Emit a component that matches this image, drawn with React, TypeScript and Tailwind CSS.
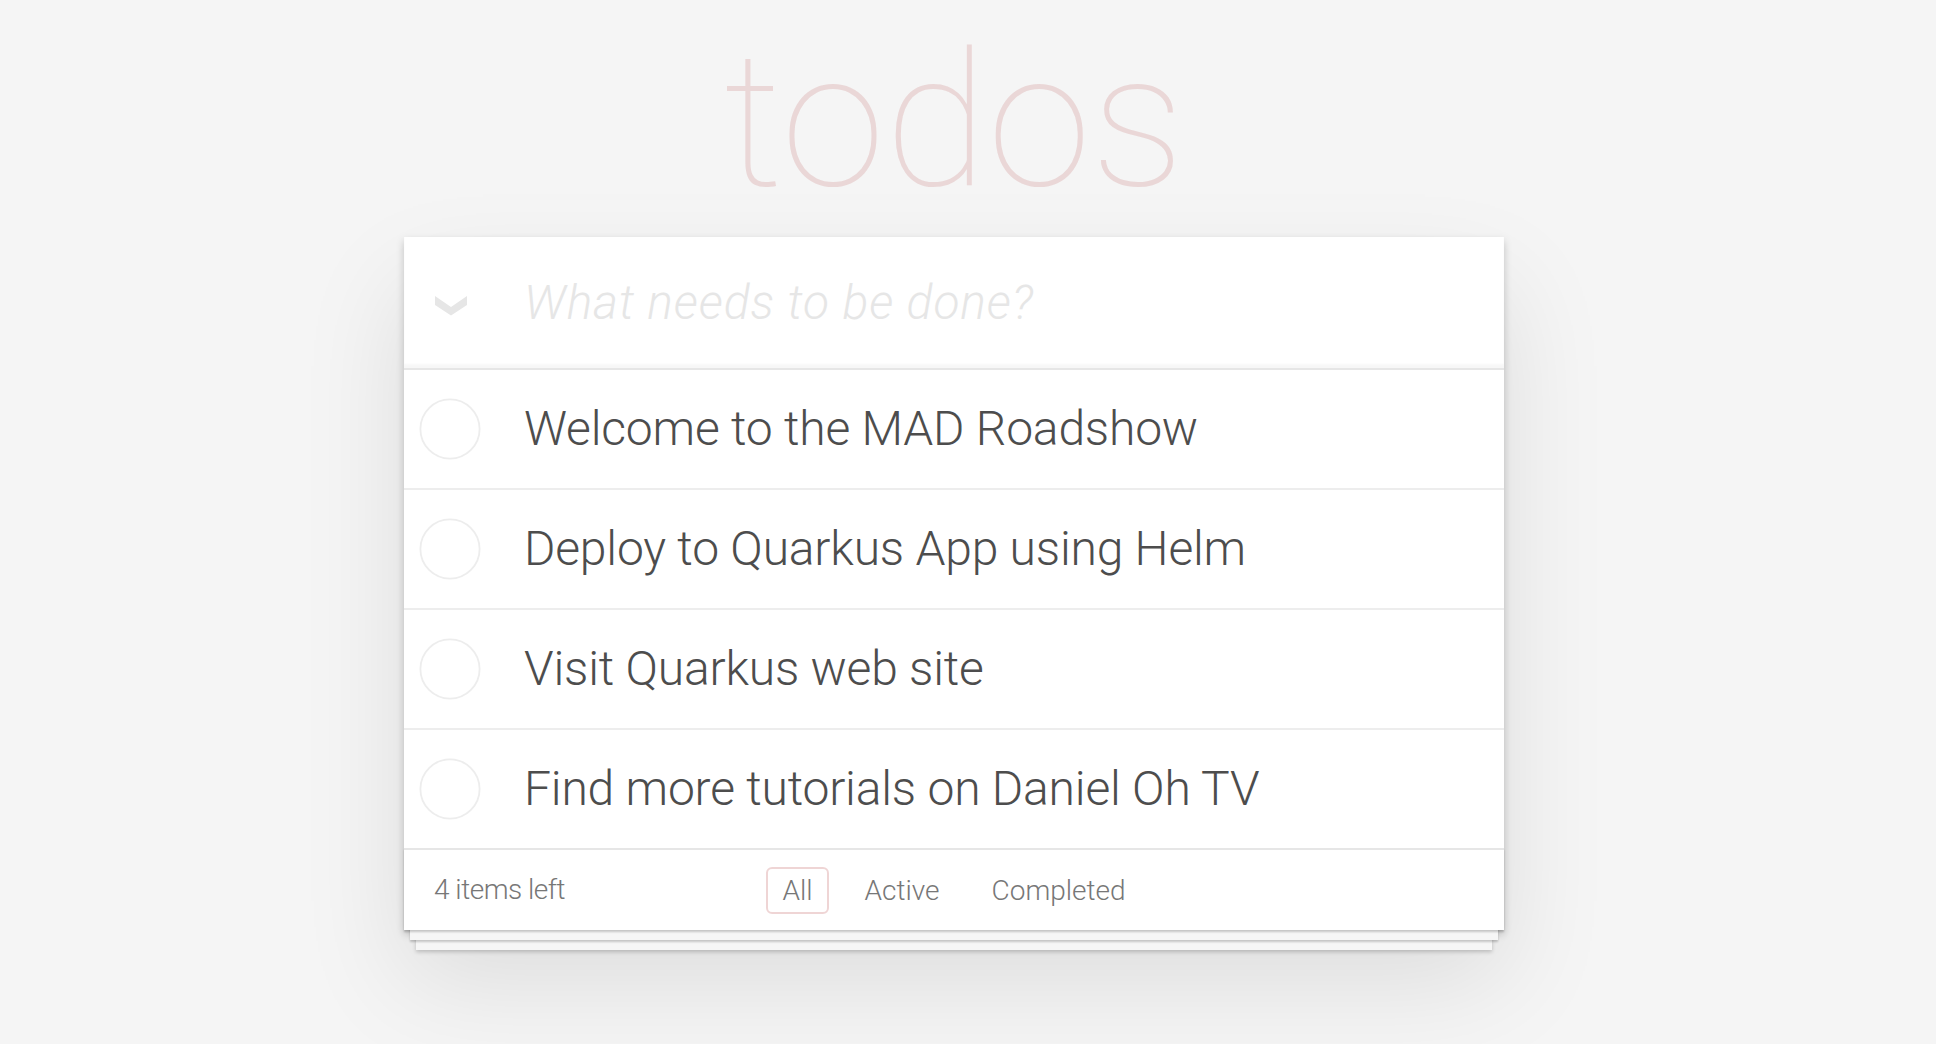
export default function App() {
  const items = [
    "Welcome to the MAD Roadshow",
    "Deploy to Quarkus App using Helm",
    "Visit Quarkus web site",
    "Find more tutorials on Daniel Oh TV",
  ];
  return (
    <div className="min-h-screen bg-[#f5f5f5] font-['Roboto',Arial,sans-serif] font-light text-[#4d4d4d]">
      <div className="ml-[404px] w-[1100px] pt-[27px]">
        <h1 className="mb-[22px] h-[188px] text-center font-['Roboto',sans-serif] text-[188px] font-thin leading-[188px] text-[rgba(175,47,47,0.15)]">
          todos
        </h1>
        <section className="bg-white shadow-[0_4px_8px_0_rgba(0,0,0,0.2),0_50px_100px_0_rgba(0,0,0,0.1)]">
          <header className="flex h-[131px] shadow-[inset_0_-4px_2px_rgba(0,0,0,0.03)]">
            <svg className="ml-[31px] mt-[59px] shrink-0" width="32" height="20" viewBox="0 0 32 20">
              <polygon points="0,0 16,11 32,0 32,9 16,19.5 0,9" fill="#e6e6e6" />
            </svg>
            <input
              className="h-full min-w-0 flex-1 bg-transparent pl-[57px] pr-[32px] text-[48px] font-light text-[#4d4d4d] outline-none placeholder:italic placeholder:tracking-[0.9px] placeholder:text-[#e6e6e6]"
              placeholder="What needs to be done?"
            />
          </header>
          <ul className="border-t-2 border-[#e6e6e6]">
            {items.map((t, i) => (
              <li
                key={t}
                className={
                  i < items.length - 1
                    ? "flex h-[120px] items-center border-b-2 border-[#ededed]"
                    : "flex h-[118px] items-center"
                }
              >
                <svg className="ml-[14px] shrink-0" width="64" height="64" viewBox="0 0 64 64">
                  <circle cx="32" cy="32" r="29.6" fill="none" stroke="#ededed" strokeWidth="1.8" />
                </svg>
                <label className="ml-[42px] text-[48px] leading-[1.2] tracking-[-0.2px] text-[#4d4d4d]">
                  {t}
                </label>
              </li>
            ))}
          </ul>
          <footer className="grid h-[82px] grid-cols-[1fr_auto_1fr] items-center border-t-2 border-[#e6e6e6] px-[30px] text-[28px] text-[#777] shadow-[0_2px_2px_rgba(0,0,0,0.2),0_16px_0_-6px_#f6f6f6,0_18px_2px_-6px_rgba(0,0,0,0.2),0_32px_0_-12px_#f6f6f6,0_34px_4px_-12px_rgba(0,0,0,0.2)]">
            <span className="leading-[40px] tracking-[-0.5px]">
              <strong className="font-light">4</strong> items left
            </span>
            <ul className="flex gap-[8px]">
              <li>
                <a className="mx-[6px] inline-block rounded-[6px] border-2 border-[rgba(175,47,47,0.2)] px-[14px] py-[6px] leading-[31px]">
                  All
                </a>
              </li>
              <li>
                <a className="mx-[6px] inline-block rounded-[6px] border-2 border-transparent px-[14px] py-[6px] leading-[31px]">
                  Active
                </a>
              </li>
              <li>
                <a className="mx-[6px] inline-block rounded-[6px] border-2 border-transparent px-[14px] py-[6px] leading-[31px]">
                  Completed
                </a>
              </li>
            </ul>
            <span />
          </footer>
        </section>
      </div>
    </div>
  );
}
